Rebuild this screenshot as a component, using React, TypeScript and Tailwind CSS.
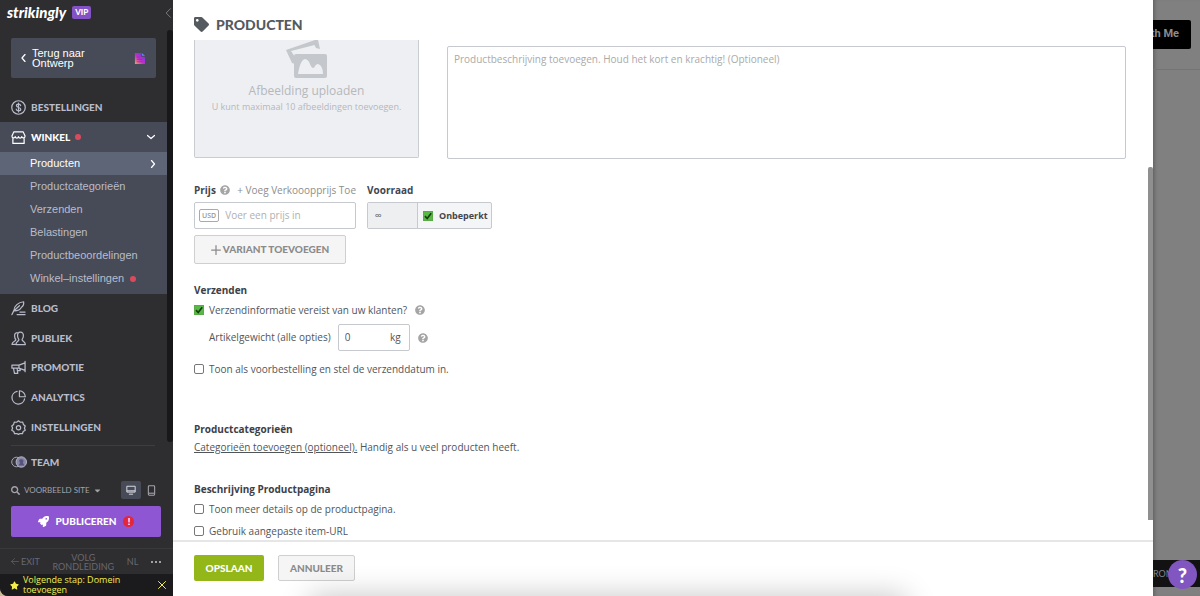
import React from 'react';
import { FaTag, FaStar, FaSearch, FaRocket, FaQuestionCircle, FaCaretDown } from 'react-icons/fa';

function Line({ children, className = 'size-[15px]' }: { children: React.ReactNode; className?: string }) {
  return (
    <svg
      viewBox="0 0 16 16"
      fill="none"
      stroke="currentColor"
      strokeWidth="1.3"
      strokeLinecap="round"
      strokeLinejoin="round"
      aria-hidden="true"
      className={`shrink-0 ${className}`}
    >
      {children}
    </svg>
  );
}

const DollarIcon = () => (
  <Line>
    <circle cx="8" cy="8" r="7.2" />
    <path d="M10.3 6c-.2-1-1.100-1.500-2.300-1.500s-2.200.6-2.200 1.700c0 2.400 4.600 1.200 4.600 3.600 0 1.100-1.100 1.700-2.400 1.700s-2.300-.6-2.400-1.700M8 3.300v9.400" />
  </Line>
);
const StoreIcon = () => (
  <Line>
    <path d="M3 2h10l2 4.500c0 2.400-3 2.700-3.500.6-.6 2-3 2-3.500 0-.5 2-2.900 2-3.500 0C4 9.200 1 8.900 1 6.500L3 2ZM2 9v5.300h12V9" />
  </Line>
);
const QuillIcon = () => (
  <Line>
    <path d="M1 14.500 3.200 10C3 5.500 8 1.200 13.500.8c.3 3-.8 5-2.300 5.800-1.500 2.800-4 3.800-7.600 4M3.400 10.200 9 5M6.500 14.500H15M9.500 11.800H15" />
  </Line>
);
const PeopleIcon = () => (
  <Line>
    <path d="M6.700 1.800c-2.200.2-3 1.700-2.800 3.900.1 1.500.5 2.700 1.300 3.600.2 1.700-4.200 1.500-4.200 4.900h4M10 1.300c2.400 0 3.300 1.600 3.200 4-.1 1.700-.6 2.900-1.400 3.700-.2 2 3.500 1.800 3.500 5.500H5.300c0-3.700 3.300-3.500 3.100-5.500-.8-1-1.300-2.200-1.400-3.700-.1-2.400.6-4 3-4Z" />
  </Line>
);
const HornIcon = () => (
  <Line>
    <path d="M15 1.500v11M15 3 8.500 5.500H1v3.200h7.500L15 11M2.700 9l1 5.300h3.500L6.500 9M8.500 5.500v3.200M9.500 9.500l.3 1.800H7" />
  </Line>
);
const PieIcon = () => (
  <Line>
    <path d="M6.500 1.500a6.800 6.800 0 1 0 8 8M9 .8V7.200h6.300A6.600 6.600 0 0 0 9 .8Z" />
  </Line>
);
const GearIcon = () => (
  <Line>
    <path d="m8 .9 2 1.500 2.500-.1.700 2.400 2 1.600L14.300 8.600l.9 2.300-2.200 1.300-.8 2.400-2.500-.2L8 15.300l-1.700-.9-2.500.2-.8-2.400L.8 10.900l.9-2.300L.8 6.300l2-1.600.7-2.400 2.500.1L8 .9Z" />
    <circle cx="8" cy="8.200" r="2.300" />
  </Line>
);

function Help() {
  return (
    <button type="button" aria-label="Help" className="shrink-0 text-[#a5a5a5]">
      <FaQuestionCircle className="size-[10px]" />
    </button>
  );
}

function Check({ id, checked = false }: { id: string; checked?: boolean }) {
  return (
    <span className="grid size-[10px] shrink-0">
      <input
        id={id}
        type="checkbox"
        defaultChecked={checked}
        className="peer col-start-1 row-start-1 size-[10px] appearance-none rounded-xs border border-[#777] bg-white checked:rounded-none checked:border-[#58ab45] checked:bg-[#58b947]"
      />
      <svg
        viewBox="0 0 10 10"
        fill="none"
        stroke="#173d12"
        strokeWidth="1.700"
        className="pointer-events-none invisible col-start-1 row-start-1 size-[10px] peer-checked:visible"
      >
        <path d="M2 5.200 4.200 7.500 8.200 2.300" />
      </svg>
    </span>
  );
}

function CheckRow({ id, label, checked }: { id: string; label: string; checked?: boolean }) {
  return (
    <div className="flex h-4 items-center gap-[5px]">
      <Check id={id} checked={checked} />
      <label htmlFor={id}>{label}</label>
      {checked && (
        <span className="ml-[3px] flex">
          <Help />
        </span>
      )}
    </div>
  );
}

const subItems = ['Producten', 'Productcategorieën', 'Verzenden', 'Belastingen', 'Productbeoordelingen', 'Winkel–instellingen'];
const navItems = [
  { label: 'BLOG', icon: <QuillIcon /> },
  { label: 'PUBLIEK', icon: <PeopleIcon /> },
  { label: 'PROMOTIE', icon: <HornIcon /> },
  { label: 'ANALYTICS', icon: <PieIcon /> },
  { label: 'INSTELLINGEN', icon: <GearIcon /> },
];

function Sidebar() {
  return (
    <aside className="flex w-[173px] shrink-0 flex-col overflow-hidden rounded-bl-lg bg-[#2e2e31] font-['Lato',sans-serif] text-[#b9bccb]">
      <header className="flex h-[30px] shrink-0 items-start justify-between pt-1 pl-[7px]">
        <div className="flex items-center gap-[6px]">
          <span className="text-[15px] leading-4 font-black text-white italic">strikingly</span>
          <span className="rounded-xs bg-[#8352c4] px-[3px] text-[8px] leading-[13px] font-black text-white">VIP</span>
        </div>
        <button type="button" aria-label="Inklappen" className="pt-1 text-[#8b8b8f]">
          <Line className="h-[10px] w-[10px]">
            <path d="M12 1 5 8l7 7" />
          </Line>
        </button>
      </header>

      <div className="flex shrink-0">
        <nav className="flex min-w-0 flex-1 flex-col pt-2 text-[10px] font-black">
          <a href="#ontwerp" className="mx-[11px] flex h-10 items-center rounded-xs bg-[#474b57] pr-[11px] pl-[9px] font-['Liberation_Sans',sans-serif] text-[11px] leading-[10px] font-normal text-white">
            <Line className="mr-1 h-2 w-2 [stroke-width:2.500]">
              <path d="M10 1 4 8l6 7" />
            </Line>
            <span className="flex-1">
              Terug naar
              <br />
              Ontwerp
            </span>
            <svg viewBox="0 0 12 12" className="size-[11px]" aria-hidden="true">
              <defs>
                <linearGradient id="doc" x1="0" y1="1" x2="1" y2="0">
                  <stop offset="0" stopColor="#f3a25c" />
                  <stop offset=".45" stopColor="#c02fc5" />
                  <stop offset="1" stopColor="#5a3fe8" />
                </linearGradient>
              </defs>
              <path d="M1 0h6.500v4H12v8H1Z" fill="url(#doc)" />
              <path d="m8.500 0 3.500 3H8.500Z" fill="#5c8df0" />
              <path d="M3 4.500h3M3 7h6M3 9.500h6" stroke="#6b2eb8" strokeWidth=".6" />
            </svg>
          </a>
          <a href="#bestellingen" className="mt-[14px] flex h-[30px] items-center gap-[5px] pl-[11px]">
            <DollarIcon />
            BESTELLINGEN
          </a>
          <div className="bg-[#474b57] pb-1">
            <a href="#winkel" className="flex h-[30px] items-center gap-[5px] pr-3 pl-[11px] text-white">
              <StoreIcon />
              WINKEL
              <span className="size-[6px] rounded-full bg-[#d94b5c]" />
              <Line className="ml-auto h-2 w-2 [stroke-width:2.500]">
                <path d="m1 5 7 6 7-6" />
              </Line>
            </a>
            <ul className="font-['Liberation_Sans',sans-serif] text-[11px] font-normal">
              {subItems.map((item, i) => (
                <li key={item}>
                  <a
                    href={`#sub-${i}`}
                    className={`flex h-[23px] items-center gap-[6px] pr-[10px] pl-[30px] ${i === 0 ? 'bg-[#5d6577] text-white' : ''}`}
                  >
                    {item}
                    {i === 0 && (
                      <Line className="ml-auto h-2 w-2 [stroke-width:2.500]">
                        <path d="m5 1 6 7-6 7" />
                      </Line>
                    )}
                    {i === 5 && <span className="size-[6px] rounded-full bg-[#d94b5c]" />}
                  </a>
                </li>
              ))}
            </ul>
          </div>
          <div className="grid h-[148px] grid-rows-5">
            {navItems.map((n) => (
              <a key={n.label} href={`#${n.label.toLowerCase()}`} className="flex items-center gap-[5px] pl-[11px]">
                {n.icon}
                {n.label}
              </a>
            ))}
          </div>
        </nav>
        <div className="w-[6px] rounded-full bg-[#18181a]" />
      </div>

      <div className="mr-[18px] ml-[11px] mt-[3px] border-t border-[#3e3e42]" />
      <a href="#team" className="mt-2 flex h-4 shrink-0 items-center gap-1 pl-[11px] text-[10px] font-black">
        <svg viewBox="0 0 16 12" className="h-[12px] w-4" aria-hidden="true">
          <circle cx="5.500" cy="6" r="4.800" fill="#35353a" stroke="#a5a6b4" />
          <circle cx="10.300" cy="6" r="5.200" fill="#8986a8" stroke="#b3b3c6" />
          <path d="M8 4.500c1-2 4-1.500 4.500 0L12 7l1.500 2.500h-6L9 7Z" fill="#57547b" />
        </svg>
        TEAM
      </a>
      <div className="mt-[10px] flex h-5 shrink-0 items-center pr-[17px] pl-[11px] text-[#a3a3aa]">
        <FaSearch className="mr-1 size-[9px]" />
        <button type="button" className="flex items-center gap-[3px] text-[8px]">
          VOORBEELD SITE
          <FaCaretDown className="size-[9px]" />
        </button>
        <button type="button" aria-label="Desktop" className="ml-auto flex h-[18px] w-5 items-center justify-center rounded-xs bg-[#474b57] text-[#d9dae2]">
          <svg viewBox="0 0 12 12" className="size-[10px]" fill="none" stroke="currentColor" strokeWidth="1.200">
            <path d="M1 1.500h10v7H1ZM1 7h10M3.500 11h5" />
          </svg>
        </button>
        <button type="button" aria-label="Mobiel" className="ml-[6px]">
          <svg viewBox="0 0 10 12" className="h-[11px] w-[9px]" fill="none" stroke="currentColor" strokeWidth="1.200">
            <rect x="1.500" y=".8" width="7" height="10.400" rx="1" />
            <path d="M2 9h6" />
          </svg>
        </button>
      </div>
      <button type="button" className="mt-[6px] mr-3 ml-[11px] flex h-[31px] shrink-0 items-center justify-center gap-[7px] rounded-xs bg-[#8f56d3] text-[10px] font-black text-white">
        <FaRocket className="size-[11px]" />
        PUBLICEREN
        <span className="flex size-[11px] items-center justify-center rounded-full bg-[#e3263c] text-[9px] leading-none">!</span>
      </button>
      <div className="mt-[11px] flex flex-1 items-center justify-between border-t border-[#39393c] pr-3 pl-[11px] text-[9px] leading-[9px] text-[#68686d]">
        <a href="#exit" className="flex items-center gap-[2px]">
          <Line className="h-[9px] w-2">
            <path d="M15 8H1M7 2 1 8l6 6" />
          </Line>
          EXIT
        </a>
        <a href="#rondleiding" className="text-center">
          VOLG
          <br />
          RONDLEIDING
        </a>
        <button type="button">NL</button>
        <button type="button" aria-label="Meer" className="flex gap-[2px]">
          <span className="size-[2px] rounded-full bg-[#c7c7cc]" />
          <span className="size-[2px] rounded-full bg-[#c7c7cc]" />
          <span className="size-[2px] rounded-full bg-[#c7c7cc]" />
        </button>
      </div>
      <div className="flex h-[22px] shrink-0 items-center bg-[#1b1b1d] pr-[7px] pl-[10px] font-['Open_Sans',sans-serif] text-[9px] leading-[10px] text-[#f3ee4c]">
        <FaStar className="mr-1 size-[9px] shrink-0" />
        <a href="#domein" className="flex-1">
          Volgende stap: Domein
          <br />
          toevoegen
        </a>
        <button type="button" aria-label="Sluiten">
          <Line className="h-2 w-2 [stroke-width:2]">
            <path d="m1 1 14 14M15 1 1 15" />
          </Line>
        </button>
      </div>
    </aside>
  );
}

function PriceStock() {
  return (
    <div className="mt-[23px] flex gap-[11px]">
      <div className="w-[162px]">
        <div className="flex h-4 items-center">
          <label htmlFor="price" className="mr-1 font-bold text-[#43464d]">Prijs</label>
          <Help />
          <button type="button" className="ml-auto whitespace-nowrap text-[#8d8d8d]">+ Voeg Verkooopprijs Toe</button>
        </div>
        <div className="mt-1 flex h-[27px] items-center rounded-xs border border-[#c6c9cd] px-1">
          <span className="rounded-xs border border-[#aaa] px-[2px] text-[7px] leading-[11px] font-semibold text-[#999]">USD</span>
          <input id="price" type="text" placeholder="Voer een prijs in" className="ml-[6px] min-w-0 flex-1 outline-none placeholder:text-[#b0b0b0]" />
        </div>
      </div>
      <div className="w-[125px]">
        <label htmlFor="stock" className="flex h-4 items-center font-bold text-[#43464d]">Voorraad</label>
        <div className="mt-1 flex h-[27px] rounded-xs border border-[#c6c9cd] bg-[#f4f5f6]">
          <input id="stock" type="text" defaultValue="∞" className="w-[50px] border-r border-[#c6c9cd] bg-[#eeeff0] px-[7px] outline-none" />
          <div className="flex flex-1 items-center gap-[6px] pl-[5px] text-[9px] font-bold text-[#43464d]">
            <Check id="unlimited" checked />
            <label htmlFor="unlimited">Onbeperkt</label>
          </div>
        </div>
      </div>
    </div>
  );
}

function ProductForm() {
  return (
    <form className="min-h-0 flex-1 overflow-hidden pr-[27px] pl-[21px]">
      <div className="flex items-start gap-7">
        <button type="button" className="flex h-[118px] w-[225px] flex-col items-center rounded-b-xs border border-t-0 border-[#c9ccd1] bg-[#eeeff2] text-[#b5b8bc]">
          <svg viewBox="0 0 42 38" className="h-[38px] w-[42px]" aria-hidden="true">
            <path d="M0 10 29 0h3l2 9-4-1-1.500-3L5 11l4 6v7L6 23Z" fill="#c4c7cb" />
            <path fillRule="evenodd" d="M10 14h29a2 2 0 0 1 2 2v20a2 2 0 0 1-2 2H10a2 2 0 0 1-2-2V16a2 2 0 0 1 2-2Zm2 20h25c0-6-2-9-5-10-3 0-3 4-5 4-3 0-3-9-8-9-5 1-6 11-7 15Z" fill="#c4c7cb" />
          </svg>
          <span className="mt-1 text-[12px] leading-[17px]">Afbeelding uploaden</span>
          <span className="text-[9px] leading-[15px]">U kunt maximaal 10 afbeeldingen toevoegen.</span>
        </button>
        <textarea
          aria-label="Productbeschrijving"
          placeholder="Productbeschrijving toevoegen. Houd het kort en krachtig! (Optioneel)"
          className="mt-[6px] h-[113px] min-w-0 flex-1 resize-none rounded-xs border border-[#c6c9cd] px-[6px] py-[4px] leading-4 outline-none placeholder:text-[#aaa]"
        />
      </div>

      <PriceStock />
      <button type="button" className="mt-[6px] flex h-[29px] w-[152px] items-center justify-center gap-[2px] rounded-xs border border-[#cfcfcf] bg-[#f5f5f5] font-['Lato',sans-serif] font-black text-[#8b8b8b]">
        <Line className="h-[10px] w-[10px] [stroke-width:2]">
          <path d="M8 1v14M1 8h14" />
        </Line>
        VARIANT TOEVOEGEN
      </button>

      <h2 className="mt-[18px] leading-4 font-bold text-[#3d4047]">Verzenden</h2>
      <div className="mt-1">
        <CheckRow id="shipping" label="Verzendinformatie vereist van uw klanten?" checked />
      </div>
      <div className="mt-[6px] flex h-[27px] items-center pl-[15px]">
        <label htmlFor="weight">Artikelgewicht (alle opties)</label>
        <span className="mr-2 ml-[7px] flex h-[27px] w-[72px] items-center rounded-xs border border-[#c6c9cd] pr-2 pl-[6px]">
          <input id="weight" type="text" defaultValue="0" className="min-w-0 flex-1 outline-none" />
          kg
        </span>
        <Help />
      </div>
      <div className="mt-[10px]">
        <CheckRow id="preorder" label="Toon als voorbestelling en stel de verzenddatum in." />
      </div>

      <h2 className="mt-11 leading-4 font-bold text-[#3d4047]">Productcategorieën</h2>
      <p className="mt-[2px] leading-4">
        <a href="#categorie" className="underline">Categorieën toevoegen (optioneel).</a> Handig als u veel producten heeft.
      </p>

      <h2 className="mt-[26px] leading-4 font-bold text-[#3d4047]">Beschrijving Productpagina</h2>
      <div className="mt-1 flex flex-col gap-[6px]">
        <CheckRow id="details" label="Toon meer details op de productpagina." />
        <CheckRow id="url" label="Gebruik aangepaste item-URL" />
      </div>
    </form>
  );
}

export default function App() {
  return (
    <div className="flex h-screen min-h-[560px] overflow-hidden bg-[#c9bb96] font-['Open_Sans',sans-serif] text-[10px] text-[#50555c]">
      <Sidebar />
      <main className="relative flex min-w-0 flex-1 flex-col overflow-hidden bg-white">
        <header className="flex h-10 shrink-0 items-center gap-[7px] pt-2 pl-[21px] text-[#555960]">
          <FaTag className="size-[15px]" />
          <h1 className="font-['Lato',sans-serif] text-[14px] font-black">PRODUCTEN</h1>
        </header>
        <ProductForm />
        <footer className="flex h-14 shrink-0 items-center gap-[14px] border-t-2 border-[#e6e6e6] pb-[2px] pl-[21px] font-['Lato',sans-serif] font-black">
          <button type="button" className="h-[26px] w-[70px] rounded-xs bg-[#93b719] text-white">OPSLAAN</button>
          <button type="button" className="h-[26px] w-[77px] rounded-xs border border-[#cfcfcf] bg-[#f5f5f5] text-[#8b8b8b]">ANNULEER</button>
        </footer>
        <div className="pointer-events-none absolute top-full right-[247px] left-[137px] h-10 shadow-[0_0_30px_rgba(0,0,0,0.230)]" />
        <div className="absolute top-[167px] right-0 bottom-[76px] w-[5px] rounded-t-xs bg-[#8f8f8f]" />
      </main>
      <aside className="relative flex w-[47px] shrink-0 flex-col justify-between overflow-hidden bg-[#808080] shadow-[inset_4px_0_4px_-3px_rgba(0,0,0,0.300)]">
        <div className="flex h-[70px] items-center border-b border-[#747474]">
          <a href="#contact" className="flex h-[29px] w-[38px] items-center justify-end rounded-r-xs bg-black pr-3 font-['Roboto',sans-serif] text-[11px] font-bold whitespace-nowrap text-[#8c8c8c]">
            th Me
          </a>
        </div>
        <div className="mb-[9px] flex h-[27px] items-center bg-[#121212] font-['Lato',sans-serif] text-[9px] text-[#858585]">RON</div>
        <button type="button" aria-label="Hulp" className="absolute right-[3px] bottom-[7px] flex size-[29px] items-center justify-center rounded-full bg-[#8256c0] font-['Lato',sans-serif] text-[20px] font-black text-white">
          ?
        </button>
      </aside>
    </div>
  );
}
